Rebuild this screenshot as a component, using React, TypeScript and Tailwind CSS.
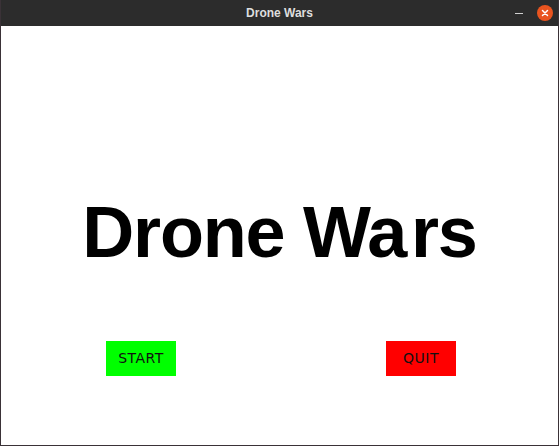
export default function App() {
  return (
    <div className="w-[559px] h-[446px] flex flex-col bg-white border border-t-0 border-[#3a3237] overflow-hidden">
      {/* title bar */}
      <div className="h-[26px] flex-shrink-0 bg-[#2c2c2c] flex items-center relative">
        <div className="flex-1 text-center text-[12px] font-bold text-[#dedede] font-['Liberation_Sans',sans-serif]">
          Drone Wars
        </div>
        <div className="absolute right-[5px] top-0 h-[26px] flex items-center gap-[14px]">
          <div className="w-[8px] h-[1px] bg-[#d0d0d0]" />
          <div className="w-[16px] h-[16px] rounded-full bg-[#e9541f] flex items-center justify-center">
            <svg width="8" height="8" viewBox="0 0 8 8">
              <path d="M1.5 1.5 L6.5 6.5 M6.5 1.5 L1.5 6.5" stroke="#fff" strokeWidth="1.5" strokeLinecap="round" />
            </svg>
          </div>
        </div>
      </div>

      {/* game surface */}
      <div className="flex-1 flex flex-col">
        <div className="mt-[170px] h-[72px] text-center text-[72px] leading-none font-bold tracking-[-1.2px] text-black font-['Liberation_Sans',Arial,sans-serif]">
          Drone W<span className="mr-[5px]">a</span>rs
        </div>
        <div className="mt-[73px] flex pl-[105px] gap-[210px]">
          <div className="w-[70px] h-[35px] bg-[#00ff00] flex items-center justify-center text-[14px] tracking-[0.5px] text-[#111] font-['DejaVu_Sans',sans-serif]">
            START
          </div>
          <div className="w-[70px] h-[35px] bg-[#ff0000] flex items-center justify-center text-[14px] tracking-[0.5px] text-[#111] font-['DejaVu_Sans',sans-serif]">
            QUIT
          </div>
        </div>
      </div>
    </div>
  );
}
